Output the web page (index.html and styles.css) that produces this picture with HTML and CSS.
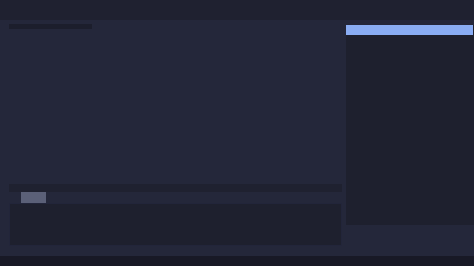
FILE: index.html
```html
<!DOCTYPE html>
<html lang="en">
<head>
  <meta charset="UTF-8">
  <meta name="viewport" content="width=device-width, initial-scale=1.0">
  <title>Editor</title>
  <link rel="stylesheet" href="styles.css">
</head>
<body>
  <div class="app">
    <div class="top-bar"></div>

    <div class="main-row">
      <div class="left-col">
        <div class="title-line"></div>
        <div class="spacer"></div>
        <div class="tab-strip"></div>
        <div class="tab-row">
          <div class="tab-chip"></div>
        </div>
        <div class="output-box"></div>
      </div>

      <div class="side-panel">
        <div class="side-selected"></div>
      </div>
    </div>

    <div class="status-bar"></div>
  </div>
</body>
</html>
```

FILE: styles.css
```css
body{
  margin: 0;
  background-color: #24273a;
  font-family: "Liberation Sans", sans-serif;
}
.app{
  width: 474px;
  height: 266px;
  display: flex;
  flex-direction: column;
}
.top-bar{
  height: 20px;
  background-color: #1f2130;
}
.main-row{
  flex: 1;
  display: flex;
}
.left-col{
  width: 333px;
  padding: 4px 3px 10px 9px;
  display: flex;
  flex-direction: column;
}
.title-line{
  width: 83px;
  height: 5px;
  background-color: #1c1e2c;
}
.spacer{
  flex: 1;
}
.tab-strip{
  height: 8px;
  background-color: #1f2130;
}
.tab-row{
  height: 11px;
  padding-left: 12px;
}
.tab-chip{
  width: 25px;
  height: 11px;
  background-color: #5b6078;
}
.output-box{
  height: 41px;
  background-color: #1e202e;
  border: 1px solid #22253a;
}
.side-panel{
  width: 128px;
  height: 200px;
  margin-top: 5px;
  margin-left: 1px;
  background-color: #1e202e;
}
.side-selected{
  width: 127px;
  height: 10px;
  background-color: #8aadf4;
}
.status-bar{
  height: 10px;
  background-color: #181926;
}
```
